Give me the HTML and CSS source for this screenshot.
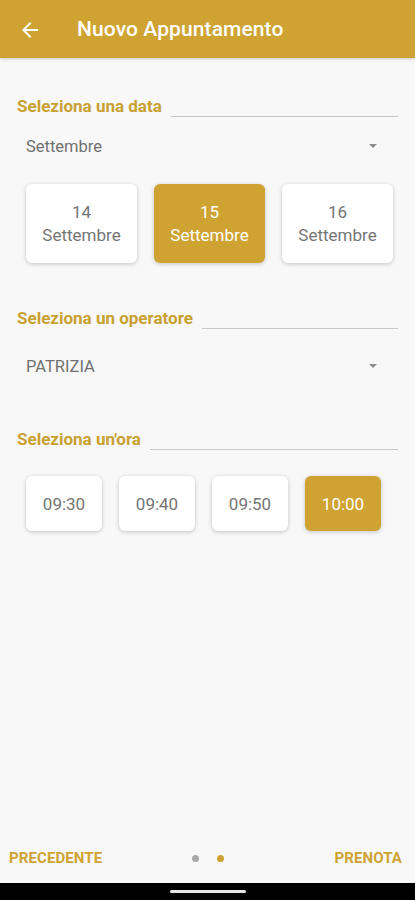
FILE: index.html
```html
<!DOCTYPE html>
<html lang="it">
<head>
<meta charset="utf-8">
<title>Nuovo Appuntamento</title>
<link rel="stylesheet" href="styles.css">
</head>
<body>
<div class="screen">
  <header class="appbar">
    <svg class="back" viewBox="0 0 24 24" width="24" height="24"><path d="M20 11H7.83l5.59-5.59L12 4l-8 8 8 8 1.41-1.41L7.83 13H20v-2z" fill="#fff"/></svg>
    <h1 class="title">Nuovo Appuntamento</h1>
  </header>

  <main class="content">
    <div class="label-row s1">
      <span class="label">Seleziona una data</span>
      <span class="rule"></span>
    </div>
    <div class="dropdown d1">
      <span>Settembre</span>
      <span class="caret"></span>
    </div>
    <div class="days">
      <div class="card day"><span>14</span><span>Settembre</span></div>
      <div class="card day active"><span>15</span><span>Settembre</span></div>
      <div class="card day"><span>16</span><span>Settembre</span></div>
    </div>

    <div class="label-row s2">
      <span class="label">Seleziona un operatore</span>
      <span class="rule"></span>
    </div>
    <div class="dropdown d2">
      <span>PATRIZIA</span>
      <span class="caret"></span>
    </div>

    <div class="label-row s3">
      <span class="label">Seleziona un'ora</span>
      <span class="rule"></span>
    </div>
    <div class="times">
      <div class="card time">09:30</div>
      <div class="card time">09:40</div>
      <div class="card time">09:50</div>
      <div class="card time active">10:00</div>
    </div>
  </main>

  <footer class="nav">
    <span class="navbtn prev">PRECEDENTE</span>
    <span class="dots"><span class="dot"></span><span class="dot on"></span></span>
    <span class="navbtn next">PRENOTA</span>
  </footer>
  <div class="sysbar"><span class="pill"></span></div>
</div>
</body>
</html>
```
FILE: styles.css
```css
* { box-sizing: border-box; }
html, body { margin: 0; padding: 0; }
body {
  font-family: Roboto, "Liberation Sans", sans-serif;
  background: #f8f8f8;
}
.screen {
  width: 415px;
  height: 900px;
  display: flex;
  flex-direction: column;
  overflow: hidden;
}
.appbar {
  height: 58px;
  flex: none;
  background: #cfa332;
  display: flex;
  align-items: center;
  padding-left: 18px;
  box-shadow: 0 1px 3px rgba(0,0,0,0.18);
  position: relative;
  z-index: 1;
}
.back { display: block; margin-top: 1px; }
.title {
  margin: 0 0 0 35px;
  color: #fff;
  font-size: 21px;
  font-weight: 500;
  letter-spacing: 0.1px;
}
.content {
  flex: 1;
  padding: 0 17px;
  display: flex;
  flex-direction: column;
}
.label-row {
  display: flex;
  height: 21px;
}
.label {
  line-height: 20px;
  font-size: 17px;
  font-weight: 700;
  color: #c9a032;
  white-space: nowrap;
  margin-right: 9px;
}
.rule {
  flex: 1;
  border-bottom: 1px solid #c9c9c9;
}
.s1 { margin-top: 38px; }
.s2 { margin-top: 45px; }
.s3 { margin-top: 45px; }
.dropdown {
  height: 36px;
  display: flex;
  align-items: center;
  justify-content: space-between;
  padding: 0 21px 0 9px;
  font-size: 16.5px;
  color: #707070;
}
.d1 { margin-top: 11px; }
.d2 { margin-top: 19px; }
.caret {
  width: 0;
  height: 0;
  border-left: 4.5px solid transparent;
  border-right: 4.5px solid transparent;
  border-top: 4.5px solid #8a8a8a;
}
.card {
  background: #fff;
  border-radius: 6px;
  box-shadow: 0 1px 4px rgba(0,0,0,0.22);
  color: #757575;
  font-size: 17px;
  display: flex;
  align-items: center;
  justify-content: center;
}
.card.active {
  background: #cfa332;
  color: #fff;
}
.days {
  display: flex;
  gap: 17px;
  padding-left: 9px;
  margin-top: 20px;
}
.day {
  width: 111px;
  height: 79px;
  flex-direction: column;
  line-height: 23px;
}
.times {
  display: flex;
  gap: 17px;
  padding-left: 9px;
  margin-top: 26px;
}
.time {
  width: 76px;
  height: 55px;
}
.nav {
  height: 50px;
  flex: none;
  display: grid;
  grid-template-columns: 1fr auto 1fr;
  align-items: center;
  padding: 0 13px 0 9px;
}
.navbtn {
  font-size: 15px;
  font-weight: 700;
  color: #cfa332;
  letter-spacing: 0.1px;
}
.prev { justify-self: start; }
.next { justify-self: end; }
.dots {
  display: flex;
  gap: 18px;
  margin-left: 5px;
}
.dot {
  width: 7px;
  height: 7px;
  border-radius: 50%;
  background: #a9a9a9;
}
.dot.on { background: #cfa332; }
.sysbar {
  height: 17px;
  flex: none;
  background: #000;
  display: flex;
  justify-content: center;
  align-items: center;
}
.pill {
  width: 76px;
  height: 3px;
  border-radius: 2px;
  background: #e6e6e6;
}
```
